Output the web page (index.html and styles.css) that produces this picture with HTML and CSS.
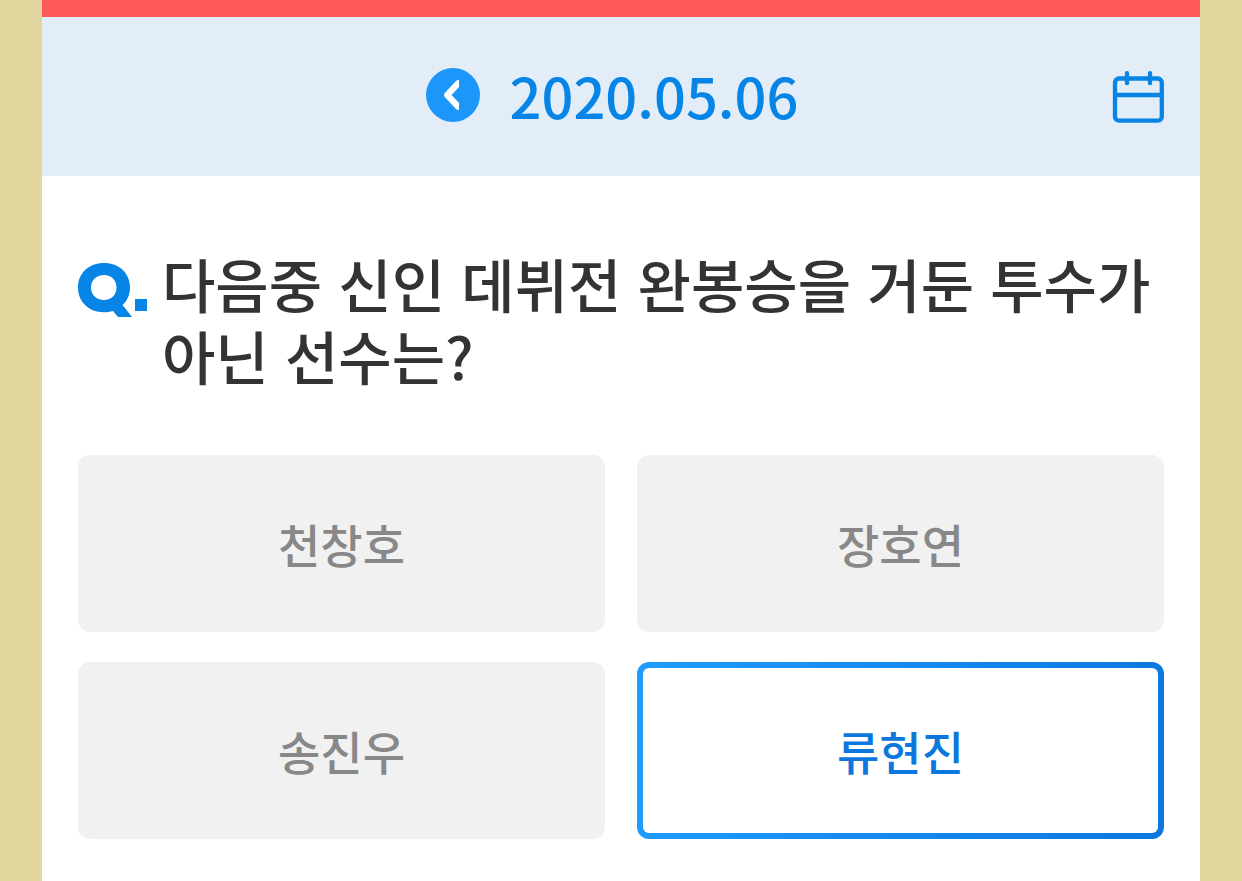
FILE: index.html
```html
<!DOCTYPE html>
<html lang="ko">
<head>
<meta charset="utf-8">
<meta name="viewport" content="width=device-width, initial-scale=1">
<title>퀴즈</title>
<link rel="stylesheet" href="styles.css">
</head>
<body>
<main class="page">
  <header class="datebar">
    <div class="datebar-center">
      <button class="prev" type="button" aria-label="이전 날짜">
        <svg viewBox="0 0 54 54"><circle cx="27" cy="27" r="27" fill="#1c97f9"/><path d="M33 12v7L25.500 27l7.500 8v7q-1.700 .3-3-1L18.800 29q-1.800-2 0-4L30 13q1.300-1.300 3-1z" fill="#fff"/></svg>
      </button>
      <time class="date" datetime="2020-05-06">2020.05.06</time>
    </div>
    <button class="calendar" type="button" aria-label="달력">
      <svg viewBox="0 0 52 54"><g fill="none" stroke="#0685e6" stroke-width="4.300"><rect x="3" y="8.500" width="46.800" height="42.200" rx="4"/><path d="M3 25h47"/><path d="M15 3.200v10M38 3.200v10" stroke-linecap="round"/></g></svg>
    </button>
  </header>
  <section class="quiz">
    <h1 class="question">
      <svg class="q-mark" viewBox="0 0 70 56" role="img" aria-label="Q."><g fill="#0685e6"><path fill-rule="evenodd" d="M26 0C41 0 52 10 52 24.500c0 7.500-3 13.500-7.500 17.500L54 54H40l-5-6c-3 1-6 1.200-9 1.200C11 49.200 0 39 0 24.500S11 0 26 0zm0 12c-7.500 0-13 5-13 12.500S18.500 37 26 37s12.500-5 12.500-12.500S33.500 12 26 12z"/><path d="M57 36h12v12H57z"/></g></svg>
      <span>다음중 신인 데뷔전 완봉승을 거둔 투수가 아닌 선수는?</span>
    </h1>
    <div class="answers">
      <button class="answer" type="button">천창호</button>
      <button class="answer" type="button">장호연</button>
      <button class="answer" type="button">송진우</button>
      <button class="answer selected" type="button" aria-pressed="true">류현진</button>
    </div>
  </section>
</main>
</body>
</html>
```
FILE: styles.css
```css
* { box-sizing: border-box; }
body {
  margin: 0;
  background: #e2d69f;
  font-family: "Noto Sans CJK KR", sans-serif;
}
button { border: 0; padding: 0; background: none; font: inherit; cursor: pointer; }
svg { display: block; }
.page {
  min-height: 100vh;
  margin: 0 42px;
  border-top: 17px solid #ff5a5a;
  background: #fff;
}
.datebar {
  display: grid;
  grid-template-columns: 1fr auto 1fr;
  align-items: center;
  height: 159px;
  padding: 0 36px 0 18px;
  background: #e2edf7;
}
.datebar-center { grid-column: 2; display: flex; align-items: center; gap: 30px; padding-bottom: 4px; }
.prev { width: 54px; height: 54px; }
.date {
  font-size: 56px;
  line-height: 80px;
  font-weight: 500;
  color: #0685e6;
}
.calendar { justify-self: end; width: 52px; height: 54px; }
.quiz { padding: 71px 36px 42px; }
.question {
  display: flex;
  gap: 14px;
  margin: 0;
  font-size: 58px;
  line-height: 72px;
  font-weight: 500;
  color: #333;
  word-break: keep-all;
}
.q-mark { flex: none; width: 70px; height: 56px; margin-top: 16px; }
.answers {
  display: grid;
  grid-template-columns: 1fr 1fr;
  gap: 30px 32px;
  margin-top: 64px;
}
.answer {
  height: 177px;
  padding-bottom: 2px;
  border-radius: 12px;
  background: #f1f1f1;
  color: #888;
  font-size: 46px;
  font-weight: 500;
}
.selected {
  border: 6px solid transparent;
  background: linear-gradient(#fff, #fff) padding-box, linear-gradient(100deg, #209cff, #0c77dc) border-box;
  color: #0c77dc;
}
```
